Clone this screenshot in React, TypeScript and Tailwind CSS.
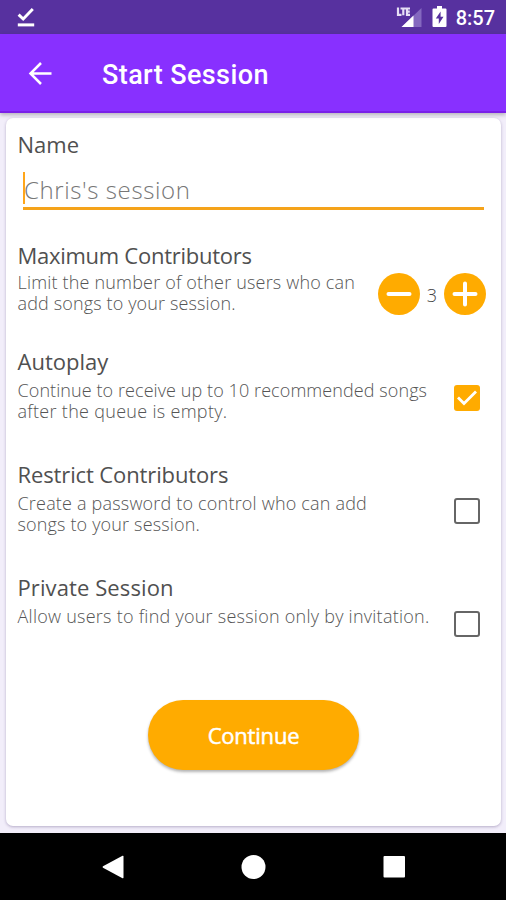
import { useState } from "react";
import type { ReactNode } from "react";

function StatusBar() {
  return (
    <div className="flex h-[34px] shrink-0 items-center bg-[#57319f] pl-[17px] pr-[11px] text-white">
      <svg width="18" height="20" viewBox="0 0 18 20" fill="none" stroke="currentColor">
        <path d="M1.6 7.6 6.2 12 15.8 2" strokeWidth="2.9" />
        <path d="M.8 17.9h16.4" strokeWidth="3" />
      </svg>
      <div className="ml-auto flex items-center">
        <svg width="27" height="22" viewBox="0 0 27 22" className="mr-[10px]">
          <path d="M26.500 2v19H6.500z" fill="#8468bf" />
          <path d="M18.500 9.500v11.500H6.500z" fill="#fff" />
          <g fill="none" stroke="#e6dff5" strokeWidth="2.2">
            <path d="M3 1.500v7.300h3.500M5.500 2.500h5.500M8.300 2v7.300M15 2.500h-3v6.300h3M12 5.700h2.800" />
          </g>
        </svg>
        <svg width="15" height="22" viewBox="0 0 15 22" className="mr-[9px]">
          <path d="M5 0h5v2.400h3.500q1 0 1 1V20q0 1-1 1h-12q-1 0-1-1V3.400q0-1 1-1H5z" fill="#fff" />
          <path d="M8.600 5.500 3.800 12.600h3v5.400l4.700-7.300H8.600z" fill="#57319f" />
        </svg>
        <span className="pt-0.5 font-['Roboto'] text-[20px] font-medium leading-none">8:57</span>
      </div>
    </div>
  );
}

function Toolbar() {
  return (
    <div className="z-10 flex h-[79px] shrink-0 items-center border-b-2 border-[#7a1fe8] bg-[#8830ff] pl-7 text-white shadow-[0_2px_4px_rgba(0,0,0,0.25)]">
      <svg width="24" height="24" viewBox="0 0 24 24" fill="none" stroke="currentColor" strokeWidth="2.5">
        <path d="M23.500 12.500H2.500M13 2 2.500 12.500 13 23" />
      </svg>
      <h1 className="ml-[50px] pt-1 font-['Roboto'] text-[27px] font-medium leading-8 tracking-[0.4px]">Start Session</h1>
    </div>
  );
}

function Heading({ children, className = "" }: { children: ReactNode; className?: string }) {
  return <h2 className={`whitespace-nowrap text-[22px] leading-7 text-[#505050] ${className}`}>{children}</h2>;
}

function Desc({ children }: { children: ReactNode }) {
  return (
    <p className="flex flex-col whitespace-nowrap text-[18px] font-light leading-[21px] text-[#555]">{children}</p>
  );
}

function RoundButton({ plus, onClick }: { plus?: boolean; onClick: () => void }) {
  return (
    <button
      onClick={onClick}
      aria-label={plus ? "More" : "Less"}
      className="flex size-[42px] items-center justify-center rounded-full bg-[#ffab00]"
    >
      <svg width="26" height="26" viewBox="0 0 26 26" stroke="#fff" strokeWidth="4" strokeLinecap="round">
        <path d={plus ? "M2.500 13h21M13 2.500v21" : "M2.500 13h21"} />
      </svg>
    </button>
  );
}

function Check({ on, onClick }: { on: boolean; onClick: () => void }) {
  return (
    <button
      role="checkbox"
      aria-checked={on}
      onClick={onClick}
      className={
        on
          ? "flex size-[26px] items-center justify-center rounded-[3px] bg-[#ffab00]"
          : "size-[26px] rounded-[3px] border-[2.5px] border-[#666]"
      }
    >
      {on && (
        <svg width="20" height="16" viewBox="0 0 20 16" fill="none" stroke="#fff" strokeWidth="2.8">
          <path d="M1 7.500 7 13.500 19 1.500" />
        </svg>
      )}
    </button>
  );
}

export default function App() {
  const [count, setCount] = useState(3);
  const [autoplay, setAutoplay] = useState(true);
  const [restrict, setRestrict] = useState(false);
  const [hidden, setHidden] = useState(false);

  return (
    <div className="flex h-[900px] w-[506px] flex-col overflow-hidden bg-[#f2eefa] font-['Open_Sans',sans-serif]">
      <StatusBar />
      <Toolbar />

      <main className="mb-[7px] ml-1.5 mr-[5px] mt-[5px] flex grow flex-col rounded-[7px] bg-white pl-[11.5px] pr-[17px] pt-3 shadow-[0_1px_3px_rgba(70,50,110,0.35)]">
        <Heading>Name</Heading>
        <div className="ml-[5.5px] flex h-[52px] items-center border-b-[3px] border-[#f5a31a]">
          <span className="mt-2.5 h-8 w-0.5 bg-[#ffa61a]" />
          <span className="-ml-px mt-3.5 text-[24px] font-light leading-8 tracking-[0.6px] text-[#777]">
            Chris's session
          </span>
        </div>

        <section className="mt-[31px] flex h-[106px] justify-between">
          <div>
            <Heading className="tracking-[-0.27px]">Maximum Contributors</Heading>
            <div className="pt-[3px]">
              <Desc>
                <span className="tracking-[0.18px]">Limit the number of other users who can</span>
                <span className="tracking-[0.14px]">add songs to your session.</span>
              </Desc>
            </div>
          </div>
          <div className="-mr-0.5 mt-8 flex h-[42px] items-center">
            <RoundButton onClick={() => setCount(Math.max(0, count - 1))} />
            <span className="w-6 pt-0.5 text-center text-[18px] font-light text-[#444]">{count}</span>
            <RoundButton plus onClick={() => setCount(count + 1)} />
          </div>
        </section>

        <section className="flex h-[113px] justify-between">
          <div>
            <Heading>Autoplay</Heading>
            <div className="pt-[5px]">
              <Desc>
                <span className="tracking-[0.08px]">Continue to receive up to 10 recommended songs</span>
                <span className="tracking-[0.3px]">after the queue is empty.</span>
              </Desc>
            </div>
          </div>
          <div className="mr-1 pt-[38px]">
            <Check on={autoplay} onClick={() => setAutoplay(!autoplay)} />
          </div>
        </section>

        <section className="flex h-[113px] justify-between">
          <div>
            <Heading className="tracking-[-0.12px]">Restrict Contributors</Heading>
            <div className="pt-[5px]">
              <Desc>
                <span className="tracking-[0.19px]">Create a password to control who can add</span>
                <span className="tracking-[0.16px]">songs to your session.</span>
              </Desc>
            </div>
          </div>
          <div className="mr-1 pt-[38px]">
            <Check on={restrict} onClick={() => setRestrict(!restrict)} />
          </div>
        </section>

        <section className="flex h-[127px] justify-between">
          <div>
            <Heading className="tracking-[0.1px]">Private Session</Heading>
            <div className="pt-[5px]">
              <Desc>
                <span className="tracking-[0.25px]">Allow users to find your session only by invitation.</span>
              </Desc>
            </div>
          </div>
          <div className="mr-1 pt-[38px]">
            <Check on={hidden} onClick={() => setHidden(!hidden)} />
          </div>
        </section>

        <button className="ml-[130.5px] h-[70px] w-[211px] rounded-full bg-[#ffab00] text-[22px] tracking-[-0.2px] text-white shadow-[0_2px_3px_rgba(0,0,0,0.3)] [-webkit-text-stroke:0.5px_white]">
          Continue
        </button>
      </main>

      <nav className="flex h-[67px] shrink-0 items-center bg-black pl-[102px]">
        <svg width="304" height="24" viewBox="0 0 304 24" fill="#fff">
          <path d="M20.500.800q1-.5 1 .6v21.200q0 1.100-1 .6L1 12.700q-1-.7 0-1.400z" />
          <circle cx="151.500" cy="12" r="12" />
          <rect x="281.500" y="1" width="21.500" height="21.500" rx="1" />
        </svg>
      </nav>
    </div>
  );
}
